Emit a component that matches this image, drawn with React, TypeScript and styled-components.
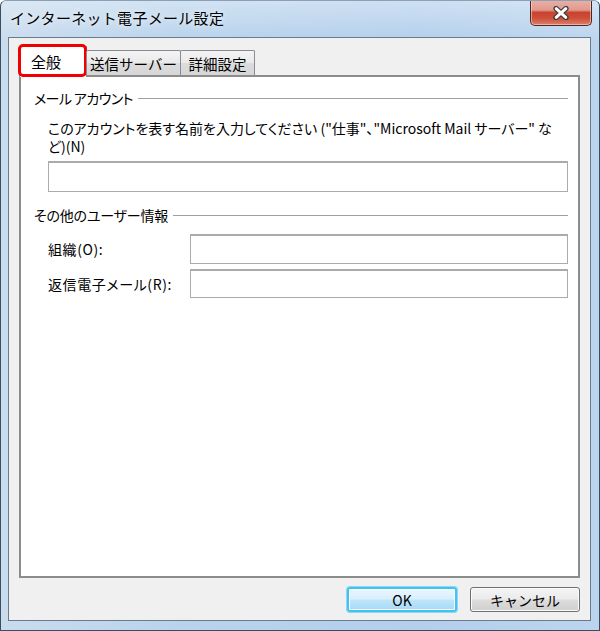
import React from "react";
import styled, { createGlobalStyle } from "styled-components";

const GlobalStyle = createGlobalStyle`
  html, body { margin: 0; padding: 0; background: #ffffff; }
  body {
    font-family: "Noto Sans CJK JP", "Noto Sans", sans-serif;
    color: #000;
    font-feature-settings: "palt";
  }
  * { box-sizing: border-box; }
`;

const Window = styled.div`
  width: 600px;
  height: 631px;
  display: flex;
  flex-direction: column;
  border: 1px solid #3b4d60;
  border-top-color: #8aa0b6;
  border-radius: 6px 6px 0 0;
  background:
    linear-gradient(180deg, rgba(255,255,255,0.35) 0%, rgba(255,255,255,0) 40px),
    linear-gradient(90deg, #c9dcee 0%, #b9d3ec 30%, #b3cfec 70%, #bcd5ee 100%);
  overflow: hidden;
`;

const TitleBar = styled.div`
  height: 36px;
  flex: none;
  display: flex;
  align-items: flex-start;
  justify-content: space-between;
  padding-left: 9px;
`;

const Title = styled.div`
  margin-top: 7px;
  font-size: 15px;
  line-height: 20px;
  letter-spacing: 0.3px;
  font-feature-settings: normal;
  color: #000;
  text-shadow: 0 0 6px rgba(255,255,255,0.9);
`;

const CloseButton = styled.div`
  width: 62px;
  height: 26px;
  margin-top: -1px;
  margin-right: 7px;
  display: flex;
  align-items: center;
  justify-content: center;
  border: 1px solid #4a2a24;
  border-top: none;
  border-radius: 0 0 5px 5px;
  background: linear-gradient(
    180deg,
    #eab0a6 0%,
    #e19a8d 40%,
    #c9432f 50%,
    #cc4e38 72%,
    #dd7f6b 100%
  );
  box-shadow: inset 0 0 0 1px rgba(255, 220, 210, 0.55);
`;

const Client = styled.div`
  flex: 1;
  display: flex;
  flex-direction: column;
  margin: 0 8px 9px 7px;
  border: 1px solid #6b7b8c;
  background: #f0f0f0;
  padding: 6px 10px 8px 10px;
`;

const TabStrip = styled.div`
  height: 31px;
  display: flex;
  align-items: flex-end;
  position: relative;
  z-index: 1;
`;

const Tab = styled.div<{ $active?: boolean; $width: number }>`
  position: relative;
  width: ${(p) => p.$width}px;
  height: ${(p) => (p.$active ? 31 : 25)}px;
  margin-bottom: ${(p) => (p.$active ? -2 : 0)}px;
  margin-left: ${(p) => (p.$active ? 0 : -1)}px;
  display: flex;
  align-items: center;
  justify-content: ${(p) => (p.$active ? "flex-start" : "center")};
  padding-left: ${(p) => (p.$active ? 11 : 0)}px;
  padding-bottom: ${(p) => (p.$active ? 2 : 0)}px;
  font-size: ${(p) => (p.$active ? 15 : 14.5)}px;
  font-feature-settings: normal;
  white-space: nowrap;
  border: 1px solid #898c95;
  border-bottom: none;
  border-radius: 2px 2px 0 0;
  background: ${(p) =>
    p.$active
      ? "#ffffff"
      : "linear-gradient(180deg, #f4f4f4 0%, #eaeaea 48%, #dcdcdc 52%, #d6d6d6 100%)"};
  &:first-child {
    margin-left: 0;
  }
`;

const Highlight = styled.div`
  position: absolute;
  left: -2px;
  right: -1px;
  top: -3px;
  bottom: 0px;
  border: 3px solid #f00000;
  border-radius: 5px;
  pointer-events: none;
`;

const Panel = styled.div`
  flex: 1;
  background: #ffffff;
  border: 2px solid #8c8c8c;
  padding: 12px 10px 0 13px;
  display: flex;
  flex-direction: column;
`;

const GroupHeader = styled.div<{ $top: number }>`
  display: flex;
  align-items: center;
  gap: 5px;
  margin-top: ${(p) => p.$top}px;
  font-size: 14px;
  line-height: 18px;
  white-space: nowrap;
`;

const GroupLabel = styled.span<{ $spacing: number }>`
  letter-spacing: ${(p) => p.$spacing}px;
`;

const Rule = styled.div`
  flex: 1;
  height: 1px;
  background: #a0a0a0;
`;

const GroupBody = styled.div`
  padding-left: 14px;
  display: flex;
  flex-direction: column;
`;

const Description = styled.div`
  margin-top: 12px;
  font-size: 14px;
  line-height: 18px;
  white-space: nowrap;
`;

const TextBox = styled.div<{ $height: number }>`
  height: ${(p) => p.$height}px;
  background: #ffffff;
  border: 1px solid #ababab;
  border-top: 2px solid #ababab;
`;

const WideBox = styled(TextBox)`
  margin-top: 6px;
`;

const FieldGrid = styled.div`
  margin-top: 10px;
  display: grid;
  grid-template-columns: 142px 1fr;
  row-gap: 5px;
  align-items: center;
`;

const FieldLabel = styled.div`
  font-size: 14px;
  line-height: 18px;
  letter-spacing: 0.6px;
  white-space: nowrap;
`;

const ButtonRow = styled.div`
  display: flex;
  justify-content: flex-end;
  gap: 13px;
  margin-top: 9px;
`;

const Button = styled.button<{ $default?: boolean }>`
  width: 110px;
  height: 25px;
  padding: 0;
  font-family: inherit;
  font-size: 14px;
  color: #000;
  border-radius: 3px;
  border: ${(p) => (p.$default ? "2px solid #3fc3f2" : "1px solid #707070")};
  background: ${(p) =>
    p.$default
      ? "linear-gradient(180deg, #eaf6fd 0%, #d9effc 48%, #bee6fd 52%, #a7d9f5 100%)"
      : "linear-gradient(180deg, #f4f4f4 0%, #ebebeb 48%, #dddddd 52%, #cfcfcf 100%)"};
  box-shadow: ${(p) =>
    p.$default ? "0 0 0 1px #8fd6f3, inset 0 0 0 1px #ffffff" : "inset 0 0 0 1px #fbfbfb"};
`;

function CloseIcon() {
  return (
    <svg width="16" height="14" viewBox="0 0 16 14">
      <path d="M3 2.5 L13 11.5 M13 2.5 L3 11.5" stroke="#3c3c3c" strokeWidth="5.2" strokeLinecap="round" />
      <path d="M3.2 2.7 L12.8 11.3 M12.8 2.7 L3.2 11.3" stroke="#ffffff" strokeWidth="3" strokeLinecap="round" />
    </svg>
  );
}

export default function App() {
  return (
    <>
      <GlobalStyle />
      <Window>
        <TitleBar>
          <Title>インターネット電子メール設定</Title>
          <CloseButton>
            <CloseIcon />
          </CloseButton>
        </TitleBar>
        <Client>
          <TabStrip>
            <Tab $active $width={68}>
              全般
              <Highlight />
            </Tab>
            <Tab $width={95}>送信サーバー</Tab>
            <Tab $width={75}>詳細設定</Tab>
          </TabStrip>
          <Panel>
            <GroupHeader $top={0}>
              <GroupLabel $spacing={-0.6}>メール アカウント</GroupLabel>
              <Rule />
            </GroupHeader>
            <GroupBody>
              <Description>
                このアカウントを表す名前を入力してください (&quot;仕事&quot;、&quot;Microsoft Mail サーバー&quot; な
                <br />
                ど)(N)
              </Description>
              <WideBox $height={31} />
            </GroupBody>
            <GroupHeader $top={14}>
              <GroupLabel $spacing={-0.2}>その他のユーザー情報</GroupLabel>
              <Rule />
            </GroupHeader>
            <GroupBody>
              <FieldGrid>
                <FieldLabel>組織(O):</FieldLabel>
                <TextBox $height={30} />
                <FieldLabel>返信電子メール(R):</FieldLabel>
                <TextBox $height={29} />
              </FieldGrid>
            </GroupBody>
          </Panel>
          <ButtonRow>
            <Button $default>OK</Button>
            <Button>キャンセル</Button>
          </ButtonRow>
        </Client>
      </Window>
    </>
  );
}
